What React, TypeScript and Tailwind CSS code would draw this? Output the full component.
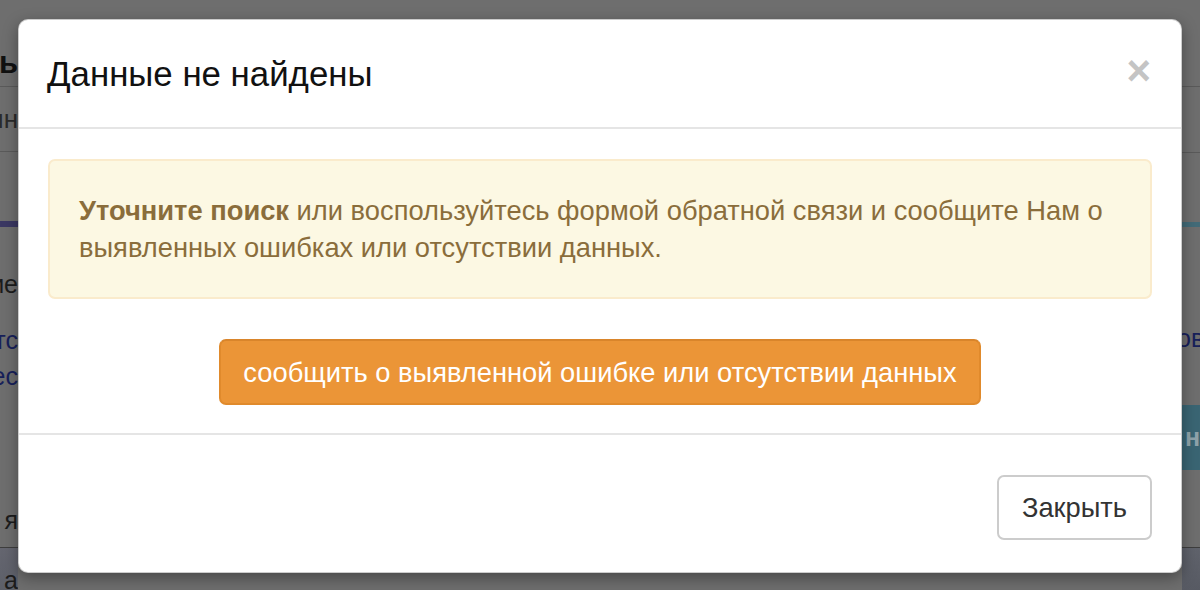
import React from "react";

const font = { fontFamily: '"Liberation Sans", Arial, sans-serif' };

function LeftStrip() {
  return (
    <div className="w-[18px] h-full flex flex-col overflow-hidden">
      <div className="h-[40px] shrink-0" />
      <div className="h-[46px] shrink-0 flex items-center justify-end whitespace-nowrap text-[31px] font-bold text-[#111]">ь</div>
      <div className="h-px shrink-0 bg-[#5a5a5a]" />
      <div className="h-[64px] shrink-0 flex items-center justify-end whitespace-nowrap text-[26px] text-[#2a2a2a]">пн</div>
      <div className="h-px shrink-0 bg-[#5a5a5a]" />
      <div className="h-[69px] shrink-0" />
      <div className="h-[6px] shrink-0 bg-[#3b3863]" />
      <div className="h-[40px] shrink-0" />
      <div className="h-[36px] shrink-0 flex items-center justify-end whitespace-nowrap text-[25px] text-[#1c1c1c]">ие</div>
      <div className="h-[20px] shrink-0" />
      <div className="h-[36px] shrink-0 flex items-center justify-end whitespace-nowrap text-[25px] text-[#17205a]">нтс</div>
      <div className="h-[36px] shrink-0 flex items-center justify-end whitespace-nowrap text-[25px] text-[#17205a]">ес</div>
      <div className="h-[108px] shrink-0" />
      <div className="h-[36px] shrink-0 flex items-center justify-end whitespace-nowrap text-[25px] text-[#1c1c1c]">я</div>
      <div className="h-[8px] shrink-0" />
      <div className="h-px shrink-0 bg-[#3e3e3e]" />
      <div className="flex-1 bg-gradient-to-b from-[#656670] to-[#5c5f68] flex justify-end whitespace-nowrap text-[25px] text-[#1c1c1c] pt-[20px] leading-[24px]">а</div>
    </div>
  );
}

function RightStrip() {
  return (
    <div className="w-[18px] h-full flex flex-col overflow-hidden">
      <div className="h-[86px] shrink-0" />
      <div className="h-px shrink-0 bg-[#5a5a5a]" />
      <div className="h-[65px] shrink-0" />
      <div className="h-px shrink-0 bg-[#5a5a5a]" />
      <div className="h-[69px] shrink-0" />
      <div className="h-[5px] shrink-0 bg-[#436b78]" />
      <div className="h-[94px] shrink-0" />
      <div className="h-[36px] shrink-0 flex items-center whitespace-nowrap text-[25px] text-[#17205a] -ml-[5px]">ов</div>
      <div className="h-[48px] shrink-0" />
      <div className="h-[65px] shrink-0 bg-[#3a6573] flex items-center whitespace-nowrap text-[25px] font-bold text-[#8ea3aa] pl-[3px]">н</div>
      <div className="h-[77px] shrink-0" />
      <div className="h-px shrink-0 bg-[#3e3e3e]" />
      <div className="flex-1 bg-gradient-to-b from-[#60636c] to-[#575a63]" />
    </div>
  );
}

export default function App() {
  return (
    <div className="relative w-[1200px] h-[590px] overflow-hidden bg-[#6e6e6e] flex" style={font}>
      <LeftStrip />
      <div className="flex-1" />
      <RightStrip />

      <div className="absolute left-[18px] top-[19px] w-[1164px] h-[554px] bg-white rounded-[10px] border border-black/20 shadow-[0_5px_15px_rgba(0,0,0,0.35)] flex flex-col overflow-hidden">
        <div className="h-[109px] shrink-0 border-b-2 border-[#e5e5e5] flex items-center justify-between pl-[28px] pr-[30px]">
          <h4 className="text-[34.8px] leading-[47px] text-[#111]">Данные не найдены</h4>
          <span className="text-[42px] font-bold leading-none text-[#c4c4c4] -mt-[6px]">×</span>
        </div>

        <div className="shrink-0 border-b-2 border-[#e5e5e5] px-[29px] pt-[30px] pb-[28px] flex flex-col items-center">
          <div className="w-full h-[140px] border-2 border-[#faebcc] bg-[#fcf8e3] rounded-[7px] px-[29px] py-[31px] text-[27.3px] leading-[37px] text-[#8a6d3b]">
            <strong className="font-bold">Уточните поиск</strong> или воспользуйтесь формой обратной связи и сообщите Нам о выявленных ошибках или отсутствии данных.
          </div>
          <button className="mt-[40px] w-[762px] h-[66px] rounded-[7px] bg-[#eb9537] border-2 border-[#e08a2c] border-t-[#d9852b] text-white text-[27.3px] leading-[37px]">
            сообщить о выявленной ошибке или отсутствии данных
          </button>
        </div>

        <div className="flex-1 flex items-start justify-end pt-[40px] pr-[29px]">
          <button className="w-[155px] h-[65px] rounded-[7px] bg-white border-2 border-[#cccccc] text-[#333] text-[27.3px] leading-[37px]">
            Закрыть
          </button>
        </div>
      </div>
    </div>
  );
}
